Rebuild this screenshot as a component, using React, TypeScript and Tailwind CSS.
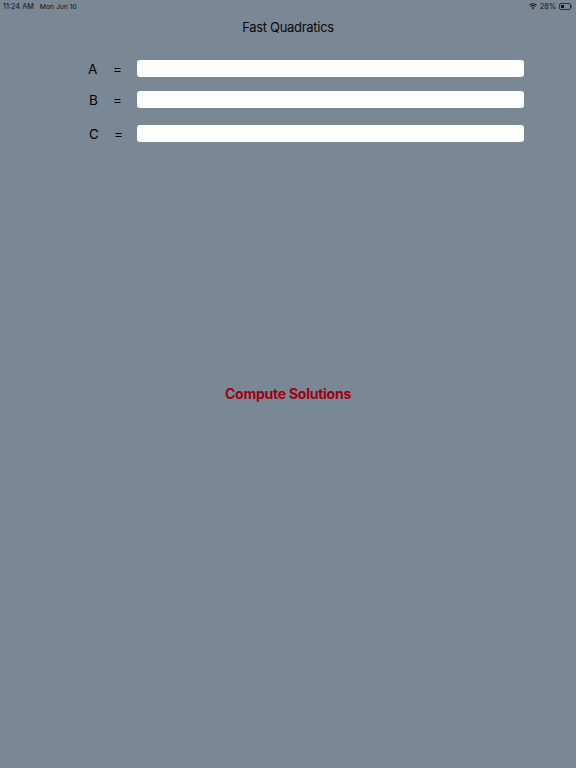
export default function App() {
  const rows = [
    { l: "A", lx: "w-[25px]", mt: "mt-0", eqw: "w-[24px]" },
    { l: "B", lx: "w-[25px] pl-[1px]", mt: "mt-[14px]", eqw: "w-[24px]" },
    { l: "C", lx: "w-[26px] pl-[1px]", mt: "mt-[17px]", eqw: "w-[23px]" },
  ];
  return (
    <div className="w-[576px] h-[768px] bg-[#7a8794] text-black overflow-hidden font-['Inter','Liberation_Sans',sans-serif]">
      <div className="h-[12px] pt-[1px] flex items-center justify-between pl-[3px] pr-[4px] leading-[11px] text-[#111]">
        <div className="flex gap-[6px]">
          <span className="text-[7.3px]">11:24 AM</span>
          <span className="text-[6.8px]">Mon Jun 10</span>
        </div>
        <div className="flex items-center gap-[3px] text-[7.3px]">
          <svg width="8" height="6.5" viewBox="0 0 18 14" fill="#111">
            <path d="M9 13.5 6.2 10.4a4 4 0 0 1 5.6 0zM4.6 8.7 3 7a8.6 8.6 0 0 1 12 0l-1.6 1.7a6.2 6.2 0 0 0-8.8 0zM1.6 5.5 0 3.8a13 13 0 0 1 18 0l-1.6 1.7a10.7 10.7 0 0 0-14.8 0z" />
          </svg>
          <span>28%</span>
          <div className="flex items-center">
            <div className="w-[12px] h-[6.5px] rounded-[2px] border-[0.5px] border-[#333] p-[1px] flex">
              <div className="w-[3px] bg-[#111] rounded-[0.5px]" />
            </div>
            <div className="w-[1px] h-[2.5px] bg-[#444] rounded-r-[1px]" />
          </div>
        </div>
      </div>
      <div className="mt-[6px] text-center text-[13px] tracking-[-0.3px] leading-[19px] text-[#0a0a0a]">Fast Quadratics</div>
      <div className="mt-[23px] pl-[88px]">
        {rows.map((r) => (
          <div key={r.l} className={`flex items-center h-[17px] ${r.mt}`}>
            <span className={`${r.lx} text-[13.5px] leading-[17px] pt-[2px]`}>{r.l}</span>
            <span className={`${r.eqw} text-[13.5px] leading-[17px] pt-[2px]`}>=</span>
            <div className="w-[387px] h-[17px] bg-white rounded-[3px]" />
          </div>
        ))}
      </div>
      <div className="mt-[242px] text-center text-[14px] tracking-[-0.25px] font-bold leading-[20px] text-[#a0000f]">Compute Solutions</div>
    </div>
  );
}
